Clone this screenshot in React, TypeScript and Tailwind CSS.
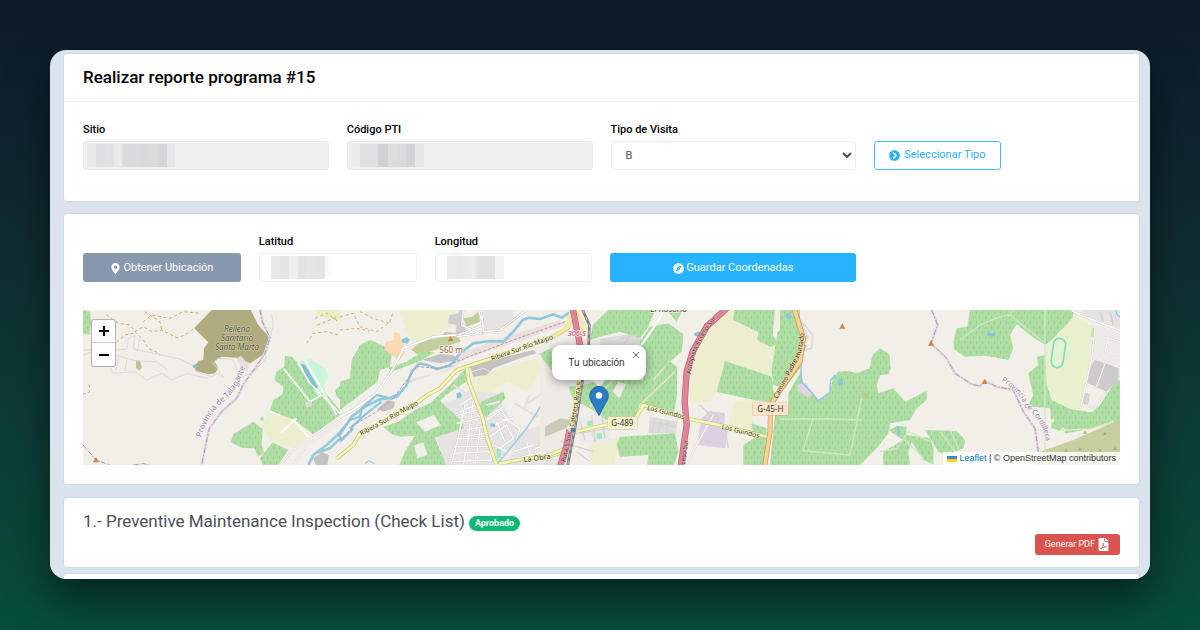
import type { ReactNode } from 'react'
import { clsx } from 'clsx'
import { FaChevronCircleRight, FaCompass, FaFilePdf, FaMapMarkerAlt } from 'react-icons/fa'

type Cell = string

// Masked values, one class pair per block
const SITIO_MASK: Cell[] = [
  'w-[9px] bg-[#e9e9ea]', 'w-[9px] bg-[#dddfe1]', 'w-[9px] bg-[#e0e1e3]', 'w-[8px] bg-[#eaeaea]',
  'w-[18px] bg-[#dadbdc]', 'w-[9px] bg-[#d9d9db]', 'w-[9px] bg-[#dadada]', 'w-[9px] bg-[#d5d6d7]', 'w-[8px] bg-[#e5e7e9]',
]
const CODIGO_MASK: Cell[] = [
  'w-[9px] bg-[#ececed]', 'w-[18px] bg-[#dfe0e1]', 'w-[10px] bg-[#cfd1d3]', 'w-[9px] bg-[#dcdddd]',
  'w-[9px] bg-[#d9dadb]', 'w-[9px] bg-[#d2d4d6]', 'w-[9px] bg-[#e6e7e8]',
]
const LATITUD_MASK: Cell[] = [
  'w-[9px] bg-[#e8e8e8]', 'w-[9px] bg-[#e5e5e5]', 'w-[9px] bg-[#efefef]', 'w-[9px] bg-[#e3e3e3]',
  'w-[9px] bg-[#e6e6e6]', 'w-[9px] bg-[#e4e4e4]', 'w-[7px] bg-[#fafafa]',
]
const LONGITUD_MASK: Cell[] = [
  'w-[10px] bg-[#ebebeb]', 'w-[10px] bg-[#e9e9e9]', 'w-[9px] bg-[#ececec]', 'w-[19px] bg-[#e1e1e1]', 'w-[9px] bg-[#f4f4f4]',
]

function Card({ children, className }: { children?: ReactNode; className?: string }) {
  return (
    <section className={clsx('rounded-[3px] bg-white shadow-[0_0_2px_rgba(130,150,175,0.45)]', className)}>
      {children}
    </section>
  )
}

interface FieldProps {
  id: string
  label: string
  mask: Cell[]
  readOnly?: boolean
  className?: string
}

function MaskedField({ id, label, mask, readOnly, className }: FieldProps) {
  return (
    <div className={className}>
      <label htmlFor={id} className="mb-[3px] block text-[11px] leading-4 font-medium text-black">{label}</label>
      <div className="relative">
        <input
          id={id}
          type="text"
          readOnly={readOnly}
          className={clsx(
            'block h-[29px] w-full rounded-[3px] border px-3 text-[11px] outline-none',
            readOnly ? 'border-[#e9e9e9] bg-[#f0f0f0]' : 'border-[#f0f0f0] bg-white',
          )}
        />
        <div className={clsx('pointer-events-none absolute top-[3px] flex h-[23px]', readOnly ? 'left-1' : 'left-3')}>
          {mask.map((cell, i) => <span key={i} className={cell} />)}
        </div>
      </div>
    </div>
  )
}

function Forest({ d }: { d: string }) {
  return (
    <>
      <path d={d} fill="#aedea3" />
      <path d={d} fill="url(#trees)" />
    </>
  )
}

function Road({ d, kind }: { d: string; kind: 'main' | 'motorway' | 'orange' | 'street' | 'lane' }) {
  const styles = {
    main: ['#c3c183', 12, '#f5f6b4', 8],
    motorway: ['#c4607c', 19, '#df8598', 15],
    orange: ['#c99a5a', 15, '#fbcf96', 11],
    street: ['#cfcccb', 8, '#ffffff', 5],
    lane: ['#dcd9d8', 6, '#ffffff', 3],
  } as const
  const [casing, outer, fill, inner] = styles[kind]
  return (
    <g fill="none" strokeLinejoin="round">
      <path d={d} stroke={casing} strokeWidth={outer} />
      <path d={d} stroke={fill} strokeWidth={inner} />
    </g>
  )
}

function Border({ d }: { d: string }) {
  return (
    <g fill="none">
      <path d={d} stroke="#e2d7e3" strokeWidth="8" />
      <path d={d} stroke="#ad99b3" strokeWidth="3" strokeDasharray="16 6 4 6" />
    </g>
  )
}

function Peak({ x, y }: { x: number; y: number }) {
  return <path d={`M${x} ${y - 9}l9 16h-18z`} fill="#cf8443" />
}

function MapDrawing() {
  return (
    <svg
      viewBox="0 0 3111 465"
      preserveAspectRatio="xMidYMid slice"
      className="block h-full w-full font-['Noto_Sans','Open_Sans',sans-serif]"
      role="img"
      aria-label="Mapa"
    >
      <defs>
        <pattern id="trees" width="18" height="30" patternUnits="userSpaceOnUse">
          <path d="M5 4v8M14 19v8" stroke="#8cc985" strokeWidth="2.5" />
        </pattern>
        <path id="talagante" d="M364 398Q382 330 430 290Q478 250 497 180" />
        <path id="cordillera" d="M664 228Q712 252 735 305Q790 345 800 420" />
        <path id="riberaEast" d="M456 168Q520 145 640 102" />
        <path id="riberaWest" d="M64 392Q130 358 180 328L236 298" />
        <path id="acceso" d="M452 208Q460 120 530 40L552 16" />
        <path id="padre" d="M712 282Q745 220 775 160Q792 130 794 50" />
      </defs>
      <rect width="3111" height="465" fill="#f2efe9" />

      {/* West */}
      <g transform="translate(-9 -15)">
        <path d="M395 15H512L535 60L570 98L548 150L510 175L482 168L470 158L425 155L403 168L415 190L405 205L385 208L345 197L343 184L356 168L370 164L372 130L385 112L342 70Z" fill="#b0ac80" />
        <path d="M387 158l14-18" stroke="#94b5a5" strokeWidth="5" />
        <path d="M470 160l12-8 14 16 14 7-8 24-20-14z" fill="#e9dcdc" />
        <Forest d="M9 15L30 20L34 50L28 90L9 85Z" />
        <path d="M168 165l12 2 6 20-8 10-10-8z" fill="#b9c593" />
        <path d="M705 15h75v36l-25-8-40-12z" fill="#e9eec3" />
        <Forest d="M615 152L635 155L660 180L700 240L735 262L780 315V330L700 388L650 350L600 330L570 315L580 285L608 268L610 245L583 225L590 200L612 185Z" />
        <path d="M650 172L690 162L735 190L746 215L732 240L738 258L712 272L690 235Z" fill="#c9f6d9" />
        <path d="M662 175L676 180L714 245L706 256L692 245Z" fill="#86bfd0" />
        <path d="M570 318L645 345L690 390L640 430L570 405L545 360Z" fill="#ecefce" />
        <Forest d="M460 388L520 350L548 372L545 420L552 445L535 455L522 430L485 428L452 412Z" />
        <Forest d="M578 412L625 435L595 480H548L540 460Z" />
        <circle cx="546" cy="342" r="6" fill="#aedea3" />
        <Forest d="M765 255L790 235V290L770 275Z" />
        <path d="M700 460l25-18 22 8-5 30h-35z" fill="#c4c2c2" />
        <g fill="none" stroke="#cfa76a" strokeWidth="3" strokeDasharray="9 8">
          <path d="M80 30L115 55L150 60L165 80L190 65L215 80L245 75L290 98L315 90L340 72" />
          <path d="M190 50L215 30L270 40L310 20L360 25" />
          <path d="M165 80L190 105L205 130L240 146" />
          <path d="M110 112L135 90L160 85M195 20L240 50L245 75" />
          <path d="M9 268L28 262V232" />
          <path d="M680 115L700 85L740 80L775 90M705 40L740 25L775 50M712 60L775 35" />
        </g>
        <g fill="none" stroke="#dcdadb" strokeWidth="3">
          <path d="M110 135L140 132L145 100L165 92L160 132L300 162L340 182L350 200L395 215L410 205L430 215L400 175L415 160L460 165L470 195L490 215L520 200L555 165L565 115L580 60L575 30" />
          <path d="M80 170L100 205L165 200L200 225L245 205L275 225L320 205L385 220M105 150L170 168L230 170L262 195M115 160L108 195M140 162L135 198M172 142L180 95M9 150L40 140M9 135H40" />
        </g>
        <path d="M338 182l8-4 4 12-10-2zM232 194l6 6" fill="#86bfd0" stroke="#86bfd0" />
        <Border d="M540 15L547 50L570 98L555 145L525 190L492 235L470 280L425 320L388 370L375 430L365 480" />
        <path d="M9 420L48 465L90 480M160 480l30-4 20 4" fill="none" stroke="#a48cab" strokeWidth="3" strokeDasharray="14 4 3 4" />
        <g fill="none" stroke="#fff" strokeWidth="5">
          <path d="M612 192L690 290L725 270M655 175L690 235L780 325M640 345L690 400M600 330L570 320M650 340L600 385" />
          <path d="M675 165L770 330" />
        </g>
        <path d="M675 292l18-4 4 16-18 4z" fill="#e2dada" />
        <Road kind="lane" d="M600 480L640 435L700 390L785 335" />
        <Road kind="lane" d="M640 480L680 420L790 345" />
        <path d="M785 378L740 420L700 450L685 480M785 395L750 430L705 445" fill="none" stroke="#97cadb" strokeWidth="8" />
        <Peak x={48} y={465} />
      </g>

      {/* Ribera Sur */}
      <g transform="translate(771 -15)">
        <path d="M180 15H345L350 50L300 85L230 110L205 90L190 50Z" fill="#eceecd" />
        <path d="M400 215L480 190L590 160L610 190L560 260L500 230L470 250L420 290L395 250Z" fill="#eceecd" />
        <path d="M195 240L330 190L350 150L480 100L660 45L680 60L560 100L380 160L320 200L215 220Z" fill="#ecdedb" />
        <path d="M355 280L385 258L470 265L500 320L545 390L470 480H315L290 400L370 360L300 295Z" fill="#e6e4e3" />
        <path d="M540 380L640 350L700 380L690 480H500Z" fill="#e6e4e3" />
        <Forest d="M0 230L30 220L35 165L60 120L90 105L135 125L155 150L150 185L120 195L112 230L60 270L20 300L0 315Z" />
        <Forest d="M145 188L200 170L250 137L285 142L240 168L155 200Z" />
        <Forest d="M130 365L175 350L225 315L270 295L330 240L378 190L382 228L320 268L300 288L370 352V370L285 398L318 480H178L195 440L225 392L180 395L155 388Z" />
        <Forest d="M405 318L425 290L490 260L497 280L440 335Z" />
        <Forest d="M595 145L640 130V175L620 172Z" />
        <path d="M222 422L250 412L262 450L232 460Z" fill="#f2efe9" />
        <path d="M228 352L282 330L302 360L255 380Z" fill="#f2efe9" />
        <path d="M215 135L240 108L300 98L315 80L350 85L362 110L330 120L270 140L230 147Z" fill="#c0cf9c" />
        <path d="M135 112L162 105V82L178 85L182 105L205 110L190 120L195 145L178 165L135 135Z" fill="#fad8b2" />
        <path d="M185 103l15-7 10 8-8 12-16-4z" fill="#8dc5d8" />
        <path d="M370 40L395 36L415 20L420 50L380 65Z" fill="#c0cf9c" />
        <path d="M325 42L330 30L355 25L358 15H372L365 60L385 80L345 90L350 60L325 55Z" fill="#cfcdcd" />
        <path d="M390 185L440 170L580 135L590 145L540 160L460 190L440 210L400 215Z" fill="#c5c2c3" />
        <path d="M245 165L300 147L340 150L358 165L300 175Z" fill="#c5c2c3" />
        <path d="M112 312L142 285L165 292L160 310L130 320Z" fill="#c4c2c2" />
        <path d="M430 15H520L520 55L470 75L430 80Z" fill="#e6e4e3" />
        <path d="M605 375L635 345L690 350L680 375L610 395Z" fill="#cbcab9" />
        <path d="M0 335L40 315L110 265L130 235L160 190L190 130L280 95L350 90" fill="none" stroke="#d0cecd" strokeWidth="8" />
        <path d="M0 335L40 315L110 265L130 235L160 190L190 130L280 95L350 90" fill="none" stroke="#fff" strokeWidth="5" />
        <path d="M355 90L430 60L415 15M425 20L430 80L480 75L560 15M370 15L365 60L420 85L350 95" fill="none" stroke="#c9c7c6" strokeWidth="7" />
        <path d="M355 90L430 60L415 15M425 20L430 80L480 75L560 15M370 15L365 60L420 85L350 95" fill="none" stroke="#fff" strokeWidth="4" />
        <g fill="none" stroke="#cdcaca" strokeWidth="6">
          <path d="M360 300L400 275L410 300L360 320M355 330L415 315L420 340L350 355M380 375L430 365L436 385L370 395M350 400L440 400L445 425L345 425M340 445L450 440L455 465L335 470M375 300L350 420L335 475M400 285L385 400L370 478M420 370L405 478" />
          <path d="M440 345L485 315L500 345L450 365M450 330L500 300M450 395L500 360L520 400L480 430M470 350L495 410M500 345L540 370L530 400M520 340L485 345M460 420L500 440M440 300L480 290M520 440L580 420M560 410L570 450M600 400L610 470M640 390L650 460M585 430L680 410M525 460L620 440" />
        </g>
        <g fill="none" stroke="#fff" strokeWidth="4">
          <path d="M360 300L400 275L410 300L360 320M355 330L415 315L420 340L350 355M380 375L430 365L436 385L370 395M350 400L440 400L445 425L345 425M340 445L450 440L455 465L335 470M375 300L350 420L335 475M400 285L385 400L370 478M420 370L405 478" />
          <path d="M440 345L485 315L500 345L450 365M450 330L500 300M450 395L500 360L520 400L480 430M470 350L495 410M500 345L540 370L530 400M520 340L485 345M460 420L500 440M440 300L480 290M520 440L580 420M560 410L570 450M600 400L610 470M640 390L650 460M585 430L680 410M525 460L620 440" />
          <path d="M525 295L590 335L605 320M550 315L570 270M555 300L615 260M615 250V290M340 240L385 270" stroke="#e3e0df" strokeWidth="6" />
        </g>
        <path d="M350 265l10-4 6 8-4 10-12 2zM452 355l14 2-1 8h-14z" fill="#8dc5d8" />
        <path d="M470 432h12v26h-12z" fill="#9ce8c0" />
        <path d="M650 205L630 245L605 300L560 370L515 425L470 480" fill="none" stroke="#9fd0de" strokeWidth="5" />
        <g fill="none" stroke="#91c8db" strokeLinejoin="round">
          <path d="M-5 395L35 335L75 305L120 283L170 276L200 240L215 200L238 175L262 180L290 192L330 182L360 145L400 115L450 108L490 110L520 80L548 45L565 38L600 42L640 28L665 38L690 22" strokeWidth="8" />
          <path d="M0 380L30 345L60 335L65 310L110 270L150 280L180 265M30 370L80 325L125 290M0 410L40 370" strokeWidth="7" />
          <path d="M75 475l12-8 18 10" strokeWidth="3" />
        </g>
        <path d="M0 405L50 355L110 320L160 280L230 185L300 190L400 150L520 105L690 45" fill="none" stroke="#b39ab8" strokeWidth="3" strokeDasharray="9 5" />
        <g fill="none" stroke="#cfb27a" strokeWidth="3" strokeDasharray="9 8">
          <path d="M0 35L40 25L60 65L110 80L150 50L160 20M0 75L50 70L90 78M60 20L100 40L150 55" />
        </g>
        <Road kind="main" d="M-10 460L40 420L60 385L140 345L225 298L262 270L300 250L350 195L380 185L440 165L560 125L640 95L685 68L690 45" />
        <Road kind="main" d="M380 185L386 228L428 340L442 400L470 482" />
        <Road kind="main" d="M478 476L550 462L620 455L680 440" />
        <path d="M395 200L430 190L460 205L430 215" fill="none" stroke="#e8e4e4" strokeWidth="3" />
        <Peak x={332} y={102} />
      </g>

      {/* Ruta 5 and Acceso Sur */}
      <g transform="translate(1371 -15)">
        <path d="M0 130L60 110L150 100L150 220L100 400L0 480Z" fill="#eeebe6" />
        <path d="M500 60L560 15H585L580 50L650 80V105L712 130L695 215L555 168L530 260L510 290L448 295L455 200L465 120Z" fill="#eceecd" />
        <path d="M580 290L640 285L640 380L630 395L565 370Z" fill="#eceecd" />
        <path d="M150 410L245 398L228 440L222 480H150Z" fill="#eceecd" />
        <path d="M15 365L60 340L95 345L80 370L15 395Z" fill="#cbcab9" />
        <path d="M180 100L290 85L310 110L300 135L180 120Z" fill="#e0dedd" />
        <path d="M330 335L412 350L408 385L325 385Z" fill="#dddcdc" />
        <path d="M110 340L200 320L215 420L120 410Z" fill="#eceae8" />
        <Forest d="M205 15H345L340 30L325 65L300 100L240 80L180 95L150 105L158 60Z" />
        <Forest d="M300 110L330 65L385 55L430 88L425 140L395 165L335 215L310 230Z" />
        <Forest d="M85 245L130 240L220 215L310 225L390 170L412 185L410 280L400 330L320 300L300 295L285 338L200 345L150 310L100 285Z" />
        <Forest d="M380 15H428L410 50Z" />
        <Forest d="M583 15H705L698 90L715 118L690 125L652 105L655 82L580 45Z" />
        <Forest d="M555 168L695 215L702 270L690 292L640 285L530 260Z" />
        <Forest d="M712 85L765 15H780V190L735 250L700 240L695 195Z" />
        <Forest d="M240 395L405 385L415 440L402 480H322L325 450L240 455L230 420Z" />
        <Forest d="M635 355L680 370L672 480H610V420L642 400Z" />
        <Forest d="M705 330L745 320H800V480H690Z" />
        <Forest d="M0 145L35 130V195L10 165Z" />
        <path d="M218 260l16-30 24 8-20 42z" fill="#f0ede6" />
        <path d="M485 340L510 318L555 325L552 362L565 370L555 430L470 420Z" fill="#ddd0e2" />
        <path d="M462 85l14-6 8 10-6 6-14-2z" fill="#8dc5d8" />
        <path d="M142 348h16v14h-16zM170 385h16v16h-16z" fill="#9ce8c0" />
        <path d="M340 225L375 185M150 305L300 130M300 300L405 200" stroke="#dfe8bd" strokeWidth="5" fill="none" />
        <g fill="none" stroke="#d5d3d2" strokeWidth="4">
          <path d="M335 350L405 365M345 340L335 380M365 345L355 382M385 350L378 384M120 350L135 405M155 330L165 410M185 325L195 400M120 385L200 370M60 410L160 440M110 440L150 470M40 440L20 470M480 300L520 340L505 420M555 365L565 430" />
          <path d="M370 15L345 60L300 120M240 100L290 90M250 120L270 90" />
        </g>
        <path d="M372 15L345 62L305 120" fill="none" stroke="#fff" strokeWidth="6" />
        <Road kind="lane" d="M440 480L470 420L520 330" />
        <Road kind="main" d="M0 460L65 435L85 430" />
        <Road kind="main" d="M100 382L215 355L285 342L310 300L440 340L560 365L692 398" />
        <path d="M45 95L80 65L95 15M120 130L130 60L110 15" fill="none" stroke="#f0eb9a" strokeWidth="9" />
        <Road kind="motorway" d="M98 10L108 60L122 130" />
        <Road kind="motorway" d="M88 375L80 420L60 485" />
        <path d="M122 130L118 230L100 330L92 380" fill="none" stroke="#eee9a0" strokeWidth="14" />
        <path d="M128 15L148 60L146 130L127 230L105 370L82 485" fill="none" stroke="#7c7a7a" strokeWidth="8" />
        <path d="M128 15L148 60L146 130L127 230L105 370L82 485" fill="none" stroke="#c8c6c6" strokeWidth="3" strokeDasharray="12 10" />
        <rect x="92" y="369" width="13" height="13" fill="#5d78b8" />
        <Road kind="motorway" d="M565 5L500 65L458 140L440 200L434 290L440 360L422 485" />
        <Road kind="orange" d="M762 10L790 100L780 170L720 255L692 300L690 380L674 485" />
      </g>

      {/* East */}
      <g transform="translate(2091 -15)">
        <Forest d="M0 15H40L65 100L58 125L30 145L28 170L45 182L0 255Z" />
        <path d="M12 30l12-6 12 12-8 8z" fill="#8dc5d8" />
        <Forest d="M25 265L62 200L70 235L115 290L150 265L160 215L175 200L205 198L230 205L268 190L278 150L300 130L328 148L332 190L325 208L300 210L290 240L295 265L340 250L375 290L440 258V285L410 310L390 345L330 355L325 385L290 430L240 480H0V340L25 320Z" />
        <Forest d="M325 375L355 362L380 365L378 390L450 400L460 430V478L430 465L395 410L385 440L390 480H310V440L370 405Z" />
        <Forest d="M435 375L530 378L555 405L550 430L500 450L475 440Z" />
        <Forest d="M570 15H882L878 38L815 105L795 118L770 105L735 78L710 58L690 90L700 130L685 165L620 152L555 155L522 132L520 110L530 70L562 65Z" />
        <path d="M882 35L950 65L935 155L902 312L870 312L815 285L800 240L795 120L820 105Z" fill="#e9f0cd" />
        <path d="M935 60L1020 80V240L975 262L925 235Z" fill="#eceae8" />
        <path d="M905 15H1020V70L900 25Z" fill="#e4e2e2" />
        <Forest d="M745 205L775 180L770 155L795 150L800 240L815 285L870 312L935 322L960 300L1000 240L1020 225V345L940 370L860 385L815 370L810 310L760 305L745 300L760 270Z" />
        <path d="M780 440L880 405L960 370L1020 342V480H770Z" fill="#c6cfa0" />
        <path d="M50 240l30-5 15 35-10 8-30-20z" fill="#e3d3e4" />
        <path d="M172 225l14-6 4 20-14 4zM622 84h24v10h-24zM350 362l8 2 2 26-6 4zM792 110l8-4 6 6-8 6z" fill="#8dc5d8" />
        <path d="M245 265h24l-4 14h-18z" fill="#b9cf8a" />
        <g fill="none" stroke="#cfe9c2" strokeWidth="4">
          <path d="M0 342H155L245 345M98 345L68 440M245 280L210 450M65 437L210 450M300 440L350 430L385 380L450 410M370 400L430 460M510 375L535 430M480 380L540 460M540 105L600 60L660 35L690 30L790 110M690 30L700 15M795 15V480" />
        </g>
        <g fill="#a8aa78">
          <path d="M915 376l6 10h-12zM975 380l6 10h-12zM858 430l6 10h-12zM900 426l6 10h-12zM960 430l6 10h-12zM1005 425l6 10h-12z" />
        </g>
        <path d="M810 345l10-5 4 8-8 6zM840 375l10-8 8 10-12 8zM880 405l8 4" fill="#e9f0cd" stroke="#e9f0cd" />
        <path d="M845 375L930 372L1000 350" stroke="#e3e9c0" strokeWidth="4" fill="none" />
        <path d="M930 190L945 165L1015 188V232L975 262L920 235Z" fill="#cdcbcb" />
        <path d="M912 262l18 4-6 34-16-4z" fill="#d6d4d4" />
        <g fill="none" stroke="#d2d0d0" strokeWidth="5">
          <path d="M945 70L935 160L902 310M955 130L1010 150M950 160L1018 188M970 95L1018 110M985 100L975 145M920 235L978 262L940 310L915 300M960 20L970 50M990 20L1000 60M975 175L950 245" />
        </g>
        <g fill="none" stroke="#fff" strokeWidth="3">
          <path d="M945 70L935 160L902 310M955 130L1010 150M950 160L1018 188M970 95L1018 110M985 100L975 145M920 235L978 262L940 310L915 300M975 175L950 245" />
        </g>
        <path d="M935 70l8-2-2 30-8-4z" fill="#c5e69a" />
        <Road kind="street" d="M875 15L900 30L1025 78" />
        <rect x="817" y="100" width="36" height="88" rx="18" transform="rotate(8 835 144)" fill="#e3f2cf" stroke="#7ddcc4" strokeWidth="5" />
        <path d="M1008 15q2 20 12 20" fill="none" stroke="#6fcfe0" strokeWidth="3" />
        <path d="M78 120L62 160L64 230L95 262L115 288L150 262L152 225L166 210" fill="none" stroke="#97cadb" strokeWidth="5" />
        <path d="M70 55L98 90L95 130L75 135M60 40L85 100" fill="none" stroke="#dddada" strokeWidth="5" />
        <Border d="M455 15L473 60L453 115L500 160L525 205L575 238L600 243L615 228L650 245L700 255L730 320L765 370L775 440" />
        <Peak x={187} y={64} />
        <Peak x={453} y={115} />
        <Peak x={614} y={230} />
      </g>

      {/* Road crossing the two eastern groups, drawn above the woods */}
      <g transform="translate(1371 -15)">
        <Road kind="orange" d="M762 10L790 100L780 170L720 255L692 300" />
      </g>

      {/* Labels */}
      <g fontSize="22" fill="#3c3a2c" paintOrder="stroke" strokeLinejoin="round">
        <g transform="translate(-9 -15)">
          <g textAnchor="middle" fontSize="24" fontStyle="italic" fill="#555440" stroke="#d3d0b0" strokeWidth="3">
            <text x="471" y="80">Relleno</text>
            <text x="471" y="108">Sanitario</text>
            <text x="471" y="136">Santa Marta</text>
          </g>
          <text fill="#a283ac" stroke="#f7f4f0" strokeWidth="4" fontSize="24"><textPath href="#talagante">Provincia de Talagante</textPath></text>
        </g>
        <g transform="translate(771 -15)">
          <text stroke="#f7f6c8" strokeWidth="3" fontSize="20"><textPath href="#riberaEast">Ribera Sur Río Maipo</textPath></text>
          <text stroke="#f7f6c8" strokeWidth="3" fontSize="20"><textPath href="#riberaWest">Ribera Sur Río Maipo</textPath></text>
          <text x="298" y="145" fill="#8b6b4a" stroke="#f7f4f0" strokeWidth="4" fontSize="24">560 m</text>
          <text transform="translate(552 472) rotate(-8)" stroke="#f7f6c8" strokeWidth="3">La Obra</text>
        </g>
        <g transform="translate(1371 -15)">
          <text x="83" y="92" fill="#c8435f" stroke="#fbeff0" strokeWidth="4" fontStyle="italic">306-S</text>
          <text transform="translate(101 366) rotate(-80)" stroke="#f3f0b8" strokeWidth="3" fontSize="19">Caletera Ruta 5</text>
          <text transform="translate(76 472) rotate(-78)" stroke="#ecaab7" strokeWidth="3" fontSize="19">Ruta 5 Sur</text>
          <text stroke="#ecaab7" strokeWidth="3" fontSize="19"><textPath href="#acceso">Autopista Acceso Sur</textPath></text>
          <text transform="translate(432 500) rotate(-83)" stroke="#ecaab7" strokeWidth="3" fontSize="19">Acceso Sur</text>
          <text x="330" y="20" stroke="#f7f4f0" strokeWidth="4" fontSize="24">El Rosario</text>
          <text transform="translate(320 314) rotate(14)" stroke="#f7f6c8" strokeWidth="3" fontSize="20">Los Guindos</text>
          <text transform="translate(544 371) rotate(14)" stroke="#f7f6c8" strokeWidth="3" fontSize="20">Los Guindos</text>
          <rect x="203" y="335" width="88" height="38" rx="3" fill="#f3f3cf" stroke="#b9b98a" strokeWidth="2" />
          <text x="247" y="363" textAnchor="middle" fontSize="24">G-489</text>
          <rect x="638" y="292" width="106" height="38" rx="3" fill="#f9e3cc" stroke="#cfa27c" strokeWidth="2" />
          <text x="691" y="320" textAnchor="middle" fontSize="24">G-45-H</text>
          <text stroke="#fbdcae" strokeWidth="3" fontSize="20"><textPath href="#padre">Camino Padre Hurtado</textPath></text>
        </g>
        <g transform="translate(2091 -15)">
          <text fill="#a283ac" stroke="#f7f4f0" strokeWidth="4" fontSize="22"><textPath href="#cordillera">Provincia de Cordillera</textPath></text>
        </g>
      </g>
    </svg>
  )
}

function LocationMap() {
  return (
    <div className="relative h-[155px] overflow-hidden font-['Liberation_Sans',Arial,sans-serif]">
      <MapDrawing />

      {/* Zoom control */}
      <div className="absolute top-[9px] left-2 flex w-[25px] flex-col overflow-hidden rounded-[3px] border border-black/30 bg-white text-black">
        <button type="button" aria-label="Acercar" className="flex h-[23px] items-center justify-center border-b border-[#ccc]">
          <svg viewBox="0 0 12 12" className="size-3" stroke="currentColor" strokeWidth="2"><path d="M1 6h10M6 1v10" /></svg>
        </button>
        <button type="button" aria-label="Alejar" className="flex h-[23px] items-center justify-center">
          <svg viewBox="0 0 12 12" className="size-3" stroke="currentColor" strokeWidth="2"><path d="M1 6h10" /></svg>
        </button>
      </div>

      {/* Marker with its popup */}
      <div className="absolute top-[35px] left-[calc(50%-3px)] flex -translate-x-1/2 flex-col items-center">
        <div className="relative flex h-[35px] w-[94px] items-center justify-center rounded-[9px] bg-white text-[10px] whitespace-nowrap text-[#333] shadow-[0_2px_10px_rgba(0,0,0,0.4)]">
          <span className="pr-1">Tu ubicación</span>
          <button type="button" aria-label="Cerrar" className="absolute top-1.5 right-1.5">
            <svg viewBox="0 0 8 8" className="size-2" stroke="#666" strokeWidth="1"><path d="M1 1l6 6M7 1L1 7" /></svg>
          </button>
        </div>
        <svg viewBox="0 0 14 7" className="h-[7px] w-[14px]"><path d="M0 0h14L7 7z" fill="#fff" /></svg>
        <svg viewBox="0 0 20 30" className="-mt-px h-[30px] w-5">
          <path d="M10 .5C4.800.5.700 4.700.700 9.800c0 4 2.300 6.800 4.300 10.200L10 29.500l5-9.500c2-3.400 4.300-6.200 4.300-10.200C19.300 4.700 15.200.5 10 .5z" fill="#2a7cc3" stroke="#2468a6" />
          <circle cx="10" cy="9.500" r="3.200" fill="#fff" />
        </svg>
      </div>

      <div className="absolute right-0 bottom-0 flex h-[13px] items-center gap-0.5 bg-white/80 px-1 text-[9px] leading-[13px] text-[#333]">
        <svg viewBox="0 0 10 6" className="h-1.5 w-2.5"><path d="M0 0h10v3H0z" fill="#4c7be1" /><path d="M0 3h10v3H0z" fill="#ffd500" /></svg>
        <span><a href="#leaflet" className="text-[#0078a8]">Leaflet</a> | © OpenStreetMap contributors</span>
      </div>
    </div>
  )
}

export default function App() {
  return (
    <div className="min-h-screen bg-linear-to-b from-[#0d1829] to-[#064e3b] px-[50px] pt-[50px] pb-[51px] font-[Roboto,sans-serif] text-[#495057]">
      <main className="flex h-[529px] flex-col overflow-hidden rounded-2xl bg-[#dbe4ee] pt-1 pr-[11px] pl-[14px] shadow-[0_20px_40px_rgba(0,0,0,0.5)]">
        <Card className="mb-[13px] shrink-0">
          <header className="border-b border-[#f2f2f2] px-[19px] py-[11px]">
            <h1 className="text-[17px] leading-[25px] font-medium text-black">Realizar reporte programa #15</h1>
          </header>
          <form className="grid grid-cols-12 items-end gap-x-[18px] px-[19px] pt-5 pb-[31px]">
            <MaskedField id="sitio" label="Sitio" mask={SITIO_MASK} readOnly className="col-span-3" />
            <MaskedField id="codigo" label="Código PTI" mask={CODIGO_MASK} readOnly className="col-span-3" />
            <div className="col-span-3">
              <label htmlFor="tipo" className="mb-[3px] block text-[11px] leading-4 font-medium text-black">Tipo de Visita</label>
              <select id="tipo" defaultValue="B" className="block h-[29px] w-full rounded-[3px] border border-[#eee] bg-white px-2.5 text-[11px] text-[#495057]">
                <option>A</option>
                <option>B</option>
              </select>
            </div>
            <div className="col-span-3">
              <button type="button" className="flex h-[29px] items-center gap-1 rounded-[3px] border border-[#45bdfb] px-3.5 text-[11px] text-[#27b1fb]">
                <FaChevronCircleRight />
                Seleccionar Tipo
              </button>
            </div>
          </form>
        </Card>

        <Card className="mb-[14px] shrink-0 px-[19px] pt-5 pb-[19px]">
          <form className="mb-7 grid grid-cols-12 items-end gap-x-[18px]">
            <button type="button" className="col-span-2 flex h-[29px] items-center justify-center gap-0.5 rounded-[3px] bg-[#8898ad] pt-0.5 text-[11px] text-white">
              <FaMapMarkerAlt />
              Obtener Ubicación
            </button>
            <MaskedField id="latitud" label="Latitud" mask={LATITUD_MASK} className="col-span-2" />
            <MaskedField id="longitud" label="Longitud" mask={LONGITUD_MASK} className="col-span-2" />
            <button type="button" className="col-span-3 flex h-[29px] items-center justify-center gap-0.5 rounded-[3px] bg-[#26b3ff] pt-0.5 text-[11px] text-white">
              <FaCompass />
              Guardar Coordenadas
            </button>
          </form>
          <LocationMap />
        </Card>

        <Card className="mb-[7px] shrink-0 px-[19px] pt-[11px] pb-3">
          <div className="flex items-center gap-1">
            <h2 className="text-[17px] leading-6">1.- Preventive Maintenance Inspection (Check List)</h2>
            <span className="mt-1 rounded-full bg-[#0fb976] px-1.5 text-[9px] leading-[15px] font-bold text-white">Aprobado</span>
          </div>
          <div className="mt-px flex justify-end">
            <button type="button" className="flex h-[21px] items-center gap-0.5 rounded-[3px] bg-[#d9534f] px-2.5 text-[9px] text-white">
              Generar PDF
              <FaFilePdf className="size-[13px]" />
            </button>
          </div>
        </Card>

        <Card className="h-10 shrink-0" />
      </main>
    </div>
  )
}
